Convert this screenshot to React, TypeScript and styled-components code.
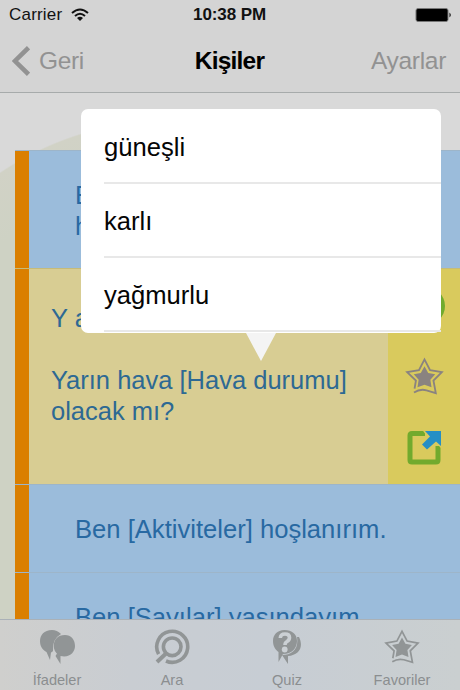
import React from "react";
import styled, { createGlobalStyle } from "styled-components";

const Global = createGlobalStyle`
  * { box-sizing: border-box; }
  body { margin: 0; font-family: "Liberation Sans", Arial, sans-serif; }
`;

const Screen = styled.div`
  position: relative;
  width: 460px;
  height: 690px;
  overflow: hidden;
  display: flex;
  flex-direction: column;
  background: #d9d9d9;
`;

const Header = styled.header`
  height: 93px;
  flex: none;
  background: #d4d4d4;
  border-bottom: 1px solid #a7abab;
`;

const StatusBar = styled.div`
  height: 30px;
  display: grid;
  grid-template-columns: 1fr auto 1fr;
  align-items: center;
  padding: 0 8px 0 9px;
  font-size: 17px;
  color: #111;
`;

const Carrier = styled.div`
  display: flex;
  align-items: center;
  gap: 9px;
  letter-spacing: 0.2px;
`;

const Clock = styled.div`
  font-weight: 700;
  font-size: 17px;
  letter-spacing: -0.1px;
  margin-right: 2px;
`;

const BatterySlot = styled.div`
  display: flex;
  justify-content: flex-end;
`;

const NavBar = styled.nav`
  height: 62px;
  display: grid;
  grid-template-columns: 1fr auto 1fr;
  align-items: center;
  padding: 0 14px 0 12px;
`;

const NavAction = styled.div<{ $end?: boolean }>`
  display: flex;
  align-items: center;
  justify-content: ${(p) => (p.$end ? "flex-end" : "flex-start")};
  gap: 9px;
  font-size: 24.5px;
  letter-spacing: ${(p) => (p.$end ? "-0.3px" : "-0.35px")};
  color: #929292;
`;

const Title = styled.h1`
  margin: 0 0 0 1px;
  font-size: 24.5px;
  letter-spacing: -0.8px;
  color: #000;
`;

const Content = styled.main`
  flex: 1;
  min-height: 0;
  overflow: hidden;
  padding: 57px 0 0 15px;
  background: radial-gradient(circle at 172px 335px, #ced2c4 0 250px, #d1d2c6 307px, transparent 308.5px);
`;

const Row = styled.section<{ $height: number; $active?: boolean }>`
  display: flex;
  height: ${(p) => p.$height}px;
  border-top: 1px solid ${(p) => (p.$active ? "#c6bb79" : "#9db5c9")};
  background: ${(p) => (p.$active ? "#d8cd93" : "#9bbcdb")};
`;

const Stripe = styled.div`
  width: 14px;
  flex: none;
  background: #da7f00;
`;

const Phrase = styled.p`
  flex: 1;
  margin: 0;
  padding: 29px 0 0 46px;
  font-size: 25.6px;
  line-height: 31px;
  white-space: nowrap;
  color: #2869a2;
`;

const PhraseStack = styled.div`
  flex: 1;
  display: flex;
  flex-direction: column;
  gap: 31px;
  padding: 34px 0 0 22px;
  font-size: 25.5px;
  line-height: 31px;
  white-space: nowrap;
  color: #2d6993;
`;

const Actions = styled.aside`
  width: 72px;
  background: #d9ca5d;
  display: flex;
  flex-direction: column;
  align-items: center;
  gap: 32px;
  padding-top: 18px;
`;

const PlayDot = styled.div`
  width: 38px;
  height: 38px;
  margin-left: 4px;
  border-radius: 50%;
  background: #70ab2e;
`;

const TabBar = styled.footer`
  height: 71px;
  flex: none;
  display: grid;
  grid-template-columns: repeat(4, 1fr);
  background: linear-gradient(90deg, #cfcfcd, #c9cdd2 28%, #c7cdd4 58%, #cacfd0);
  border-top: 1px solid #aab1b7;
`;

const Tab = styled.div`
  display: flex;
  flex-direction: column;
  align-items: center;
  padding: 9px 1px 0 0;
  font-size: 14.6px;
  line-height: 18px;
  color: #8b8e90;
  svg { margin-bottom: 6px; }
`;

const Popover = styled.div`
  position: absolute;
  left: 81px;
  top: 109px;
  width: 360px;
  height: 224px;
  padding-left: 23px;
  border-radius: 7px;
  background: #fff;
`;

const Option = styled.div<{ $first?: boolean }>`
  height: ${(p) => (p.$first ? 75 : 74)}px;
  display: flex;
  align-items: center;
  padding-top: ${(p) => (p.$first ? 3 : 2)}px;
  border-bottom: 2px solid #e8e8e8;
  font-size: 25.6px;
  color: #050505;
`;

const Pointer = styled.svg`
  position: absolute;
  left: 165px;
  top: 224px;
`;

function StarIcon({ size, color }: { size: number; color: string }) {
  return (
    <svg width={size} height={size} viewBox="0 0 40 40">
      <path
        d="M9.8 32.5 L11.2 24.2 L2.2 15.6 L14.3 13.4 L20 2.5 L25.7 13.4 L37.8 15.6 L29.2 24.2 L31.6 37 L22 34.2 Q15.5 32.4 9.2 36.4"
        fill="none" stroke={color} strokeWidth="1.9" />
      <path d="M20 9.5 L23.8 16.3 L31 17.8 L26 23.4 L27.2 31 L20 28.4 L12.8 31 L14 23.4 L9 17.8 L16.2 16.3Z" fill={color} />
    </svg>
  );
}

function ShareIcon() {
  return (
    <svg width="36" height="38" viewBox="0 0 36 38">
      <path d="M19 5.5H6Q4 5.5 4 7.5V32Q4 34 6 34H30Q32 34 32 32V18" fill="none" stroke="#72aa2d" strokeWidth="5" />
      <path d="M15 0H36V21L31 16L22 25L12 16L20 7Z" fill="#d9ca5d" />
      <path d="M19 3H35V18L30 13.5L21 21.5L16 16.5L24 8.5Z" fill="#258fc5" />
    </svg>
  );
}

function BubblesIcon() {
  return (
    <svg width="37" height="36" viewBox="0 0 37 36" fill="#919596">
      <path d="M13 1C5 1 1 6 1 12C1 18 4 21 7.5 23L11 31L12 23.5Q13 23 14 22Q13 10 22 5Q18 1 13 1Z" />
      <path d="M26 6C18.5 6 14.8 11 14.8 16.5C14.8 21 16.5 23 18 24.5L16.5 27L21.5 35V27C31 29 36 23 36 17C36 10.5 32 6 26 6Z" />
    </svg>
  );
}

function SearchIcon() {
  return (
    <svg width="36" height="36" viewBox="0 0 36 36" fill="none" stroke="#919596">
      <path d="M4.6 25.2A15.5 15.5 0 1 1 12 32" strokeWidth="3.6" />
      <circle cx="18.2" cy="17.8" r="8.8" strokeWidth="3.6" />
      <path d="M12 24.5L3 33" strokeWidth="4" />
    </svg>
  );
}

function QuizIcon() {
  return (
    <svg width="30" height="36" viewBox="0 0 30 36">
      <path d="M27 8C32 18 27 26 16 27V35L10 26C20 26 27 20 25 8Z" fill="#919596" />
      <path d="M12.5 1C5 1 1 6 1 12C1 18 4 21 6.5 23V33L11 25C20 25 25 19 25 12C25 5 20 1 12.5 1Z" fill="#919596" />
      <path d="M8.3 9Q8.5 5 13 5Q17.5 5 17.5 8.5Q17.5 11 15 12.5Q13 13.5 13 16" fill="none" stroke="#cbd0d4" strokeWidth="3.6" />
      <circle cx="12.7" cy="20.5" r="2.9" fill="#cbd0d4" />
    </svg>
  );
}

function WifiIcon() {
  return (
    <svg width="18" height="14" viewBox="0 0 18 14" fill="none" stroke="#111" strokeWidth="2">
      <path d="M1 5Q9-2 17 5M4 8Q9 3.5 14 8" />
      <path d="M6 10Q9 7.3 12 10L9 13Z" fill="#111" stroke="none" />
    </svg>
  );
}

export default function App() {
  return (
    <>
      <Global />
      <Screen>
        <Header>
          <StatusBar>
            <Carrier>Carrier <WifiIcon /></Carrier>
            <Clock>10:38 PM</Clock>
            <BatterySlot>
              <svg width="37" height="14" viewBox="0 0 37 14">
                <rect x="1" y=".5" width="32" height="13" rx="2" fill="#000" stroke="#777" />
                <path d="M34.5 4.5Q37 7 34.5 9.5Z" fill="#000" />
              </svg>
            </BatterySlot>
          </StatusBar>
          <NavBar>
            <NavAction>
              <svg width="18" height="30" viewBox="0 0 18 30">
                <path d="M16.5 1.7L3 15L16.5 28.3" fill="none" stroke="#929292" strokeWidth="4.5" />
              </svg>
              Geri
            </NavAction>
            <Title>Kişiler</Title>
            <NavAction $end>Ayarlar</NavAction>
          </NavBar>
        </Header>
        <Content>
          <Row $height={118}>
            <Stripe />
            <Phrase>Ben [Hava durumu]<br />havayı severim.</Phrase>
          </Row>
          <Row $height={216} $active>
            <Stripe />
            <PhraseStack>
              <div>Y a r ı n</div>
              <div>Yarın hava [Hava durumu]<br />olacak mı?</div>
            </PhraseStack>
            <Actions>
              <PlayDot />
              <StarIcon size={39} color="#8a8380" />
              <ShareIcon />
            </Actions>
          </Row>
          <Row $height={88}>
            <Stripe />
            <Phrase>Ben [Aktiviteler] hoşlanırım.</Phrase>
          </Row>
          <Row $height={88}>
            <Stripe />
            <Phrase>Ben [Sayılar] yaşındayım.</Phrase>
          </Row>
        </Content>
        <TabBar>
          <Tab><BubblesIcon />İfadeler</Tab>
          <Tab><SearchIcon />Ara</Tab>
          <Tab><QuizIcon />Quiz</Tab>
          <Tab><StarIcon size={36} color="#919596" />Favoriler</Tab>
        </TabBar>
        <Popover>
          <Option $first>güneşli</Option>
          <Option>karlı</Option>
          <Option>yağmurlu</Option>
          <Pointer width="30" height="28" viewBox="0 0 30 28"><path d="M0 0H30L15 28Z" fill="#f4f4f4" /></Pointer>
        </Popover>
      </Screen>
    </>
  );
}
